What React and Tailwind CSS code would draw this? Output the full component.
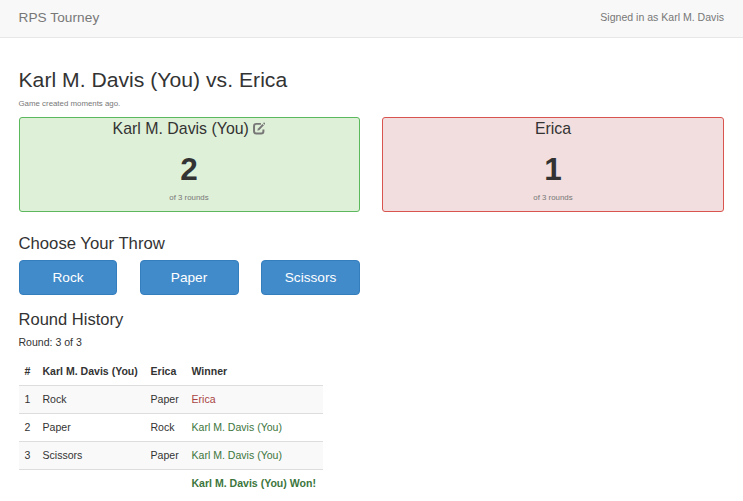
const rounds = [
  { n: 1, a: 'Rock', b: 'Paper', winner: 'Erica', won: false },
  { n: 2, a: 'Paper', b: 'Rock', winner: 'Karl M. Davis (You)', won: true },
  { n: 3, a: 'Scissors', b: 'Paper', winner: 'Karl M. Davis (You)', won: true },
];

function EditIcon() {
  return (
    <svg viewBox="0 0 12 12" className="ml-[4px] inline-block h-[12.500px] w-[12.500px] align-[-0.500px]" fill="none" stroke="#777777">
      <path d="M7.600 1.800H3.200Q1 1.800 1 4V8.800Q1 11 3.200 11H7.800Q10 11 10 8.800V7.200" strokeWidth="1.900" />
      <path d="M5.200 7.300L9.800 2.500" strokeWidth="2" />
      <path d="M4.200 8.300L4.700 6.300L6.200 7.700Z" fill="#777777" stroke="none" />
      <path d="M10.400 1.900L11.300 1" strokeWidth="2" />
    </svg>
  );
}

function Player({ name, score, editable, className }) {
  return (
    <div className={`h-[95px] rounded-[3px] border text-center ${className}`}>
      <h3 className="mt-[2px] h-[18px] text-[15.900px] leading-[18px]">{name}{editable && <EditIcon />}</h3>
      <div className="mt-[13px] text-[31.500px] leading-[37px] font-bold">{score}</div>
      <div className="mt-[4px] text-[7.875px] leading-[12px] text-[#777]">of 3 rounds</div>
    </div>
  );
}

export default function App() {
  return (
    <div className="h-[501px] overflow-hidden bg-white font-['Liberation_Sans',Arial,sans-serif] text-[10.550px] text-[#333]">
      <nav className="flex h-[38px] justify-between border-b border-[#e7e7e7] bg-[#f8f8f8] pr-[19px] pl-[18.500px] text-[#777]">
        <span className="pt-[9px] text-[13.650px] leading-[17px] tracking-[0.060px]">RPS Tourney</span>
        <span className="pt-[10px] leading-[15px]">Signed in as Karl M. Davis</span>
      </nav>
      <main className="px-[18.500px]">
        <h1 className="mt-[30px] text-[21.120px] leading-[24px] tracking-[0.030px]">Karl M. Davis (You) vs. Erica</h1>
        <p className="mt-[6px] text-[7.875px] leading-[11px] text-[#777]">Game created moments ago.</p>
        <div className="mt-[8px] ml-[0.500px] grid grid-cols-[341px_342px] gap-[22px]">
          <Player name="Karl M. Davis (You)" score="2" editable className="border-[#5cb85c] bg-[#dff0d8] pr-px" />
          <Player name="Erica" score="1" className="border-[#d9534f] bg-[#f2dede]" />
        </div>
        <h2 className="mt-[23px] text-[16.700px] leading-[18px]">Choose Your Throw</h2>
        <div className="mt-[7px] ml-[0.500px] grid grid-cols-[98px_99px_99px] gap-x-[22.500px]">
          {['Rock', 'Paper', 'Scissors'].map((t) => (
            <button key={t} className="h-[35px] rounded-[4px] border border-[#357ebd] bg-[#428bca] text-[13.650px] leading-[18px] text-white">{t}</button>
          ))}
        </div>
        <h2 className="mt-[16px] text-[16.550px] leading-[18px]">Round History</h2>
        <p className="mt-[6px] leading-[15px]">Round: 3 of 3</p>
        <table className="mt-[7px] w-[304px] table-fixed border-collapse text-left leading-[15px]">
          <colgroup>
            <col className="w-[18px]" /><col className="w-[108px]" /><col className="w-[41px]" /><col />
          </colgroup>
          <thead>
            <tr className="h-[28px] whitespace-nowrap">
              <th className="pt-[2px] pl-[6px]">#</th><th className="pt-[2px] pl-[6px]">Karl M. Davis (You)</th><th className="pt-[2px] pl-[6px]">Erica</th><th className="pt-[2px] pl-[6px]">Winner</th>
            </tr>
          </thead>
          <tbody>
            {rounds.map((r) => (
              <tr key={r.n} className="h-[28px] border-t border-[#ddd] odd:bg-[#f9f9f9]">
                <td className="pl-[6px]">{r.n}</td>
                <td className="pl-[6px]">{r.a}</td>
                <td className="pl-[6px]">{r.b}</td>
                <td className={r.won ? 'pl-[6px] text-[#3c763d]' : 'pl-[6px] text-[#a94442]'}>{r.winner}</td>
              </tr>
            ))}
            <tr className="h-[28px] border-t border-[#ddd]">
              <td colSpan={3} />
              <td className="pl-[6px] font-bold whitespace-nowrap text-[#3c763d]">Karl M. Davis (You) Won!</td>
            </tr>
          </tbody>
        </table>
      </main>
    </div>
  );
}
